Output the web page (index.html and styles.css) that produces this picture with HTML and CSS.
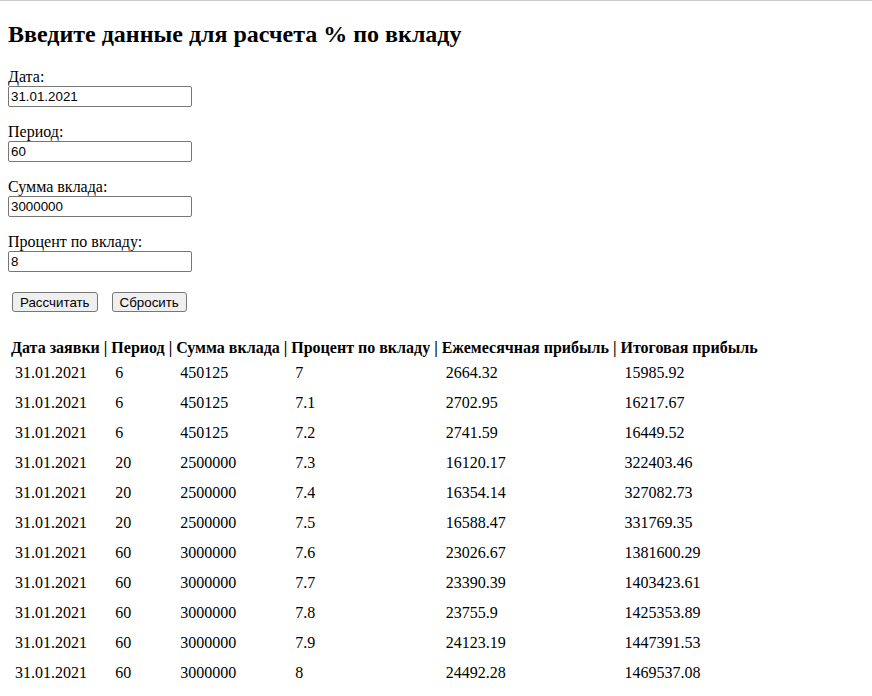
FILE: index.html
```html
<!DOCTYPE html>
<html lang="ru" class="page">
<head>
<meta charset="utf-8">
<title>Расчет процентов по вкладу</title>
<link rel="stylesheet" href="styles.css">
</head>
<body class="body">
<h2 class="title">Введите данные для расчета % по вкладу</h2>
<form class="form">
  <div class="field"><label class="label">Дата:</label><br><input class="input" type="text" value="31.01.2021"></div>
  <div class="field"><label class="label">Период:</label><br><input class="input" type="text" value="60"></div>
  <div class="field"><label class="label">Сумма вклада:</label><br><input class="input" type="text" value="3000000"></div>
  <div class="field"><label class="label">Процент по вкладу:</label><br><input class="input" type="text" value="8"></div>
  <div class="actions"><button class="btn" type="button">Рассчитать</button><button class="btn" type="reset">Сбросить</button></div>
</form>
<table class="results">
  <thead>
    <tr><th class="hcell">Дата заявки |</th><th class="hcell">Период |</th><th class="hcell">Сумма вклада |</th><th class="hcell">Процент по вкладу |</th><th class="hcell">Ежемесячная прибыль |</th><th class="hcell">Итоговая прибыль</th></tr>
  </thead>
  <tbody>
    <tr><td class="cell">31.01.2021</td><td class="cell">6</td><td class="cell">450125</td><td class="cell">7</td><td class="cell">2664.32</td><td class="cell">15985.92</td></tr>
    <tr><td class="cell">31.01.2021</td><td class="cell">6</td><td class="cell">450125</td><td class="cell">7.1</td><td class="cell">2702.95</td><td class="cell">16217.67</td></tr>
    <tr><td class="cell">31.01.2021</td><td class="cell">6</td><td class="cell">450125</td><td class="cell">7.2</td><td class="cell">2741.59</td><td class="cell">16449.52</td></tr>
    <tr><td class="cell">31.01.2021</td><td class="cell">20</td><td class="cell">2500000</td><td class="cell">7.3</td><td class="cell">16120.17</td><td class="cell">322403.46</td></tr>
    <tr><td class="cell">31.01.2021</td><td class="cell">20</td><td class="cell">2500000</td><td class="cell">7.4</td><td class="cell">16354.14</td><td class="cell">327082.73</td></tr>
    <tr><td class="cell">31.01.2021</td><td class="cell">20</td><td class="cell">2500000</td><td class="cell">7.5</td><td class="cell">16588.47</td><td class="cell">331769.35</td></tr>
    <tr><td class="cell">31.01.2021</td><td class="cell">60</td><td class="cell">3000000</td><td class="cell">7.6</td><td class="cell">23026.67</td><td class="cell">1381600.29</td></tr>
    <tr><td class="cell">31.01.2021</td><td class="cell">60</td><td class="cell">3000000</td><td class="cell">7.7</td><td class="cell">23390.39</td><td class="cell">1403423.61</td></tr>
    <tr><td class="cell">31.01.2021</td><td class="cell">60</td><td class="cell">3000000</td><td class="cell">7.8</td><td class="cell">23755.9</td><td class="cell">1425353.89</td></tr>
    <tr><td class="cell">31.01.2021</td><td class="cell">60</td><td class="cell">3000000</td><td class="cell">7.9</td><td class="cell">24123.19</td><td class="cell">1447391.53</td></tr>
    <tr><td class="cell">31.01.2021</td><td class="cell">60</td><td class="cell">3000000</td><td class="cell">8</td><td class="cell">24492.28</td><td class="cell">1469537.08</td></tr>
  </tbody>
</table>
</body>
</html>
```

FILE: styles.css
```css
.page {
  border-top: 1px solid #cbcbcb;
  background: #fff;
}
.body {
  margin: 0 8px 8px;
  font-family: "Liberation Serif", "Times New Roman", serif;
  font-size: 16px;
  color: #000;
}
.title {
  font-size: 24px;
  font-weight: bold;
  margin: 0 0 20px;
  padding-top: 20px;
}
.form {
  margin: 0;
}
.field {
  margin: 0 0 16px;
}
.label {
  font-size: 16px;
}
.input {
  box-sizing: border-box;
  width: 184px;
  height: 21px;
  margin: 0;
  padding: 1px 2px;
  border: 1px solid #767676;
  border-radius: 2px;
  font-family: "Liberation Sans", Arial, sans-serif;
  font-size: 13.33px;
  color: #000;
  background: #fff;
}
.actions {
  display: flex;
  gap: 14px;
  padding: 4px 4px 0;
  margin-bottom: 24px;
}
.btn {
  box-sizing: border-box;
  height: 20px;
  margin: 0;
  padding: 1px 7px;
  border: 1px solid #767676;
  border-radius: 3px;
  background: #efefef;
  font-family: "Liberation Sans", Arial, sans-serif;
  font-size: 13.33px;
  color: #000;
}
.results {
  border-spacing: 2px;
}
.hcell {
  padding: 1px 1px 0;
  font-weight: bold;
  text-align: left;
  white-space: nowrap;
}
.cell {
  padding: 5px;
  text-align: left;
  white-space: nowrap;
}
```
